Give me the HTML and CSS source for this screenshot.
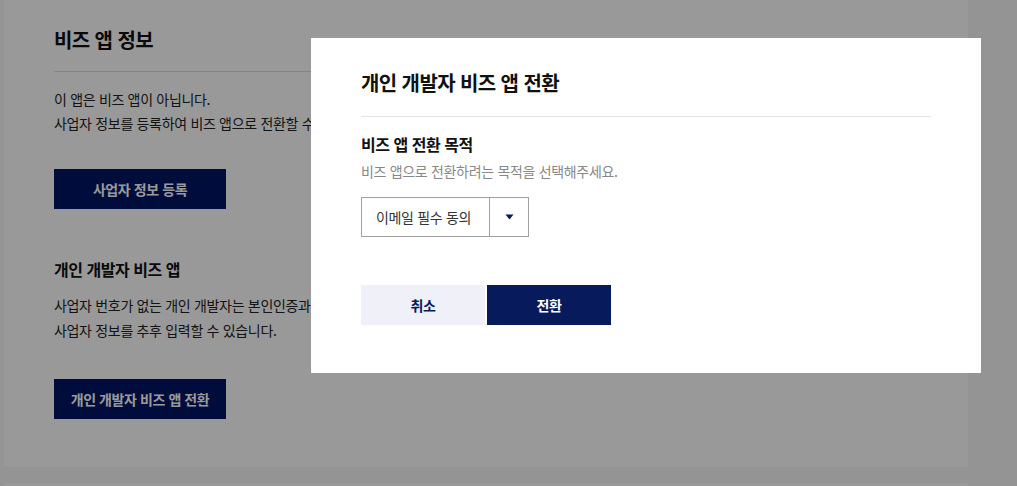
FILE: index.html
```html
<!DOCTYPE html>
<html lang="ko">
<head>
<meta charset="utf-8">
<link rel="stylesheet" href="styles.css">
</head>
<body>
<div class="page">
  <section class="card">
    <h2 class="card-title">비즈 앱 정보</h2>
    <p class="desc">이 앱은 비즈 앱이 아닙니다.<br>사업자 정보를 등록하여 비즈 앱으로 전환할 수 있습니다.</p>
    <button class="btn-dark">사업자 정보 등록</button>
    <h3 class="sub-title">개인 개발자 비즈 앱</h3>
    <p class="desc desc2">사업자 번호가 없는 개인 개발자는 본인인증과 함께<br>사업자 정보를 추후 입력할 수 있습니다.</p>
    <button class="btn-dark">개인 개발자 비즈 앱 전환</button>
  </section>
  <section class="card card-next"></section>
</div>
<div class="overlay"></div>
<div class="modal">
  <h2 class="modal-title">개인 개발자 비즈 앱 전환</h2>
  <h3 class="field-title">비즈 앱 전환 목적</h3>
  <p class="field-desc">비즈 앱으로 전환하려는 목적을 선택해주세요.</p>
  <div class="select">
    <span class="select-value">이메일 필수 동의</span>
    <span class="select-arrow"><svg width="9" height="6" viewBox="0 0 9 6"><path d="M0.5 0.5h8L4.5 5.5z" fill="#061a5c"/></svg></span>
  </div>
  <div class="actions">
    <button class="btn-cancel">취소</button>
    <button class="btn-ok">전환</button>
  </div>
</div>
</body>
</html>
```
FILE: styles.css
```css
* { box-sizing: border-box; }
html, body { margin: 0; padding: 0; }
body {
  background: #f7f7f7;
  font-family: "Noto Sans CJK KR", "Noto Sans", sans-serif;
  color: #222;
  width: 1017px;
  height: 486px;
  overflow: hidden;
  letter-spacing: -0.02em;
}
.page {
  padding-left: 4px;
  display: flex;
  flex-direction: column;
  gap: 16px;
}
.card {
  width: 964px;
  height: 467px;
  background: #fff;
  padding: 25px 50px 0;
  flex-shrink: 0;
}
.card-next { height: 3px; padding: 0; }
.card-title {
  margin: 0;
  font-size: 20px;
  line-height: 30px;
  font-weight: 700;
  color: #111;
  letter-spacing: -0.03em;
  padding-bottom: 16px;
  border-bottom: 1px solid #ddd;
}
.desc {
  margin: 15px 0 0;
  font-size: 14px;
  line-height: 24px;
  color: #222;
}
.desc2 { line-height: 25px; margin-top: 12px; }
.btn-dark {
  display: block;
  margin-top: 34px;
  width: 172px;
  height: 40px;
  border: 0;
  background: #001464;
  color: #fff;
  font-family: inherit;
  font-size: 14px;
  font-weight: 700;
  letter-spacing: -0.03em;
  padding: 0;
}
.desc2 + .btn-dark { margin-top: 36px; }
.sub-title {
  margin: 48px 0 0;
  font-size: 16px;
  line-height: 24px;
  font-weight: 700;
  color: #111;
  letter-spacing: -0.03em;
}
.overlay {
  position: fixed;
  inset: 0;
  background: rgba(0, 0, 0, 0.4);
}
.modal {
  position: absolute;
  left: 311px;
  top: 38px;
  width: 670px;
  height: 335px;
  background: #fff;
  padding: 30px 50px 0;
}
.modal-title {
  margin: 0;
  font-size: 20px;
  line-height: 30px;
  font-weight: 700;
  color: #111;
  letter-spacing: -0.03em;
  padding-bottom: 18px;
  border-bottom: 1px solid #e4e4e4;
}
.field-title {
  margin: 15px 0 0;
  font-size: 16px;
  line-height: 24px;
  font-weight: 700;
  color: #111;
  letter-spacing: -0.03em;
}
.field-desc {
  margin: 4px 0 0;
  font-size: 14px;
  line-height: 22px;
  color: #888;
}
.select {
  margin-top: 15px;
  width: 168px;
  height: 40px;
  border: 1px solid #a0a0a0;
  display: flex;
}
.select-value {
  width: 128px;
  border-right: 1px solid #a0a0a0;
  font-size: 14px;
  line-height: 38px;
  color: #333;
  padding-left: 14px;
}
.select-arrow {
  flex: 1;
  display: flex;
  align-items: center;
  justify-content: center;
}
.actions {
  margin-top: 48px;
  display: flex;
  gap: 2px;
}
.actions button {
  width: 124px;
  height: 40px;
  border: 0;
  padding: 0;
  font-family: inherit;
  font-size: 14px;
  font-weight: 700;
  letter-spacing: -0.03em;
}
.btn-cancel { background: #eff0f8; color: #061a5c; }
.btn-ok { background: #061a5c; color: #fff; }
```
